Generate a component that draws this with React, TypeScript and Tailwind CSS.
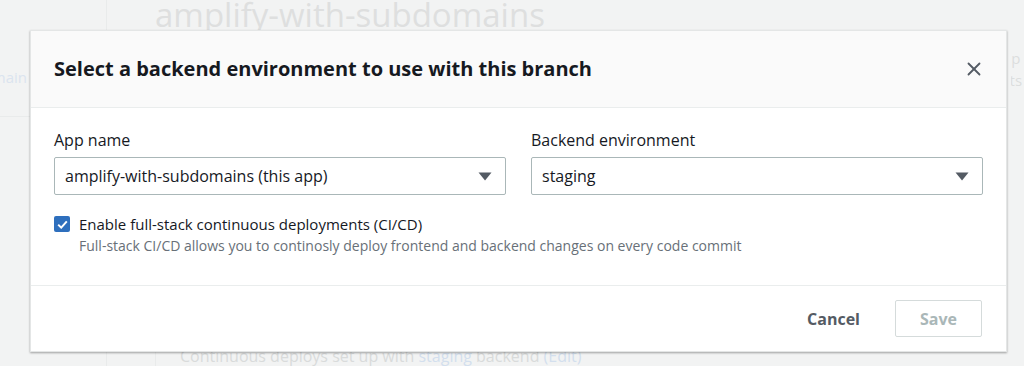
import { X } from "lucide-react";

const font = { fontFamily: '"Open Sans", "Noto Sans", Arial, sans-serif' };

function Select({ value }: { value: string }) {
  return (
    <div className="flex h-[38px] items-center justify-between rounded-[2px] border border-[#aab7b8] bg-white pl-[10px] pr-[13px] text-[16px] text-[#16191f]">
      <span>{value}</span>
      <svg width="14" height="10" viewBox="0 0 14 10" className="text-[#545b64]">
        <path d="M0.5 1.5h13L7 9.5z" fill="currentColor" />
      </svg>
    </div>
  );
}

export default function App() {
  return (
    <div className="relative h-[366px] w-[1024px] overflow-hidden bg-[#f2f3f3]" style={font}>
      {/* faded page behind the dialog */}
      <div className="flex h-full">
        <div className="w-[107px] shrink-0 border-r border-[#e9ebeb]">
          <div className="flex h-[117px] items-end justify-end border-b border-[#e9ebeb] pb-[28px] pr-[79px] text-[15px] text-[#dbe4ef]">
            main
          </div>
        </div>
        <div className="flex flex-1 flex-col">
          <div className="pl-[48px] text-[33px] leading-[30px] text-[#dedfdf]">
            amplify-with-subdomains
          </div>
          <div className="flex flex-1 justify-end pt-[17px]">
            <div className="w-[13px] overflow-hidden text-[15px] leading-[22px] text-[#dcdede]">
              <div className="-ml-[9px]">up</div>
              <div className="-ml-[19px]">ents</div>
            </div>
          </div>
          <div className="ml-[48px] flex h-[20px] border-l border-[#e9ebeb] pl-[24px] text-[16px] leading-[20px] text-[#d9dbdb]">
            <span>
              Continuous deploys set up with <span className="text-[#d3dfee]">staging</span> backend{" "}
              <span className="text-[#d3dfee]">(Edit)</span>
            </span>
          </div>
        </div>
      </div>

      {/* dialog */}
      <div className="absolute left-[30px] top-[30px] flex h-[322px] w-[977px] flex-col border border-[#e4e6e6] bg-white shadow-[0_1px_2px_rgba(0,0,0,0.35)]">
        <div className="flex h-[77px] shrink-0 items-center justify-between border-b border-[#eaeded] bg-[#fafafa] pl-[23px] pr-[21px]">
          <h2 className="text-[20px] font-bold text-[#16191f]">
            Select a backend environment to use with this branch
          </h2>
          <X size={22} strokeWidth={2} className="text-[#545b64]" />
        </div>

        <div className="flex h-[178px] shrink-0 flex-col border-b border-[#eaeded] px-[23px] pt-[22px]">
          <div className="grid grid-cols-2 gap-[25px]">
            <div>
              <div className="mb-[7px] text-[16px] leading-[20px] text-[#16191f]">App name</div>
              <Select value="amplify-with-subdomains (this app)" />
            </div>
            <div>
              <div className="mb-[7px] text-[16px] leading-[20px] text-[#16191f]">Backend environment</div>
              <Select value="staging" />
            </div>
          </div>
          <div className="mt-[19px] flex items-center gap-[9px]">
            <div className="flex h-[16px] w-[16px] items-center justify-center rounded-[2px] bg-[#2e6fbd]">
              <svg width="11" height="9" viewBox="0 0 11 9">
                <path d="M1.2 4.6l3 3L9.8 1.4" fill="none" stroke="white" strokeWidth="2" />
              </svg>
            </div>
            <span className="text-[15px] leading-[20px] text-[#16191f]">
              Enable full-stack continuous deployments (CI/CD)
            </span>
          </div>
          <div className="ml-[25px] mt-[2px] text-[14px] leading-[20px] text-[#687078]">
            Full-stack CI/CD allows you to continosly deploy frontend and backend changes on every code commit
          </div>
        </div>

        <div className="flex flex-1 items-center justify-end gap-[35px] pr-[24px]">
          <span className="text-[16px] font-bold text-[#545b64]">Cancel</span>
          <div className="flex h-[37px] w-[87px] items-center justify-center rounded-[2px] border border-[#d5dbdb] text-[16px] font-bold text-[#aab7b8]">
            Save
          </div>
        </div>
      </div>
    </div>
  );
}
